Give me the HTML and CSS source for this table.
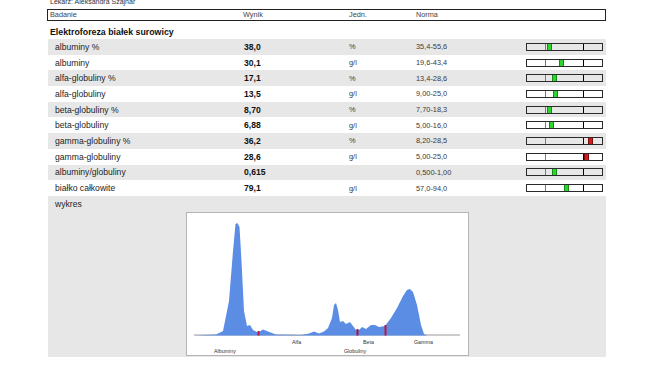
FILE: index.html
```html
<!DOCTYPE html>
<html lang="pl">
<head>
<meta charset="utf-8">
<title>Elektroforeza białek surowicy</title>
<link rel="stylesheet" href="styles.css">
</head>
<body>
<div class="page">
  <div class="doctor">Lekarz: Aleksandra Szajnar</div>
  <div class="head">
    <span>Badanie</span><span>Wynik</span><span>Jedn.</span><span>Norma</span><span></span>
  </div>
  <div class="section">Elektroforeza białek surowicy</div>
  <div class="rows">
    <div class="row alt"><span class="lbl">albuminy %</span><span class="val">38,0</span><span class="unit">%</span><span class="norm">35,4-55,6</span><div class="bar"><i class="lo"></i><i class="hi"></i><b class="mk ok" style="left:20px"></b></div></div>
    <div class="row"><span class="lbl">albuminy</span><span class="val">30,1</span><span class="unit">g/l</span><span class="norm">19,6-43,4</span><div class="bar"><i class="lo"></i><i class="hi"></i><b class="mk ok" style="left:32px"></b></div></div>
    <div class="row alt"><span class="lbl">alfa-globuliny %</span><span class="val">17,1</span><span class="unit">%</span><span class="norm">13,4-28,6</span><div class="bar"><i class="lo"></i><i class="hi"></i><b class="mk ok" style="left:25px"></b></div></div>
    <div class="row"><span class="lbl">alfa-globuliny</span><span class="val">13,5</span><span class="unit">g/l</span><span class="norm">9,00-25,0</span><div class="bar"><i class="lo"></i><i class="hi"></i><b class="mk ok" style="left:26px"></b></div></div>
    <div class="row alt"><span class="lbl">beta-globuliny %</span><span class="val">8,70</span><span class="unit">%</span><span class="norm">7,70-18,3</span><div class="bar"><i class="lo"></i><i class="hi"></i><b class="mk ok" style="left:20px"></b></div></div>
    <div class="row"><span class="lbl">beta-globuliny</span><span class="val">6,88</span><span class="unit">g/l</span><span class="norm">5,00-16,0</span><div class="bar"><i class="lo"></i><i class="hi"></i><b class="mk ok" style="left:22px"></b></div></div>
    <div class="row alt"><span class="lbl">gamma-globuliny %</span><span class="val">36,2</span><span class="unit">%</span><span class="norm">8,20-28,5</span><div class="bar"><i class="lo"></i><i class="hi"></i><b class="mk bad" style="left:61px"></b></div></div>
    <div class="row"><span class="lbl">gamma-globuliny</span><span class="val">28,6</span><span class="unit">g/l</span><span class="norm">5,00-25,0</span><div class="bar"><i class="lo"></i><i class="hi"></i><b class="mk bad" style="left:57px"></b></div></div>
    <div class="row alt"><span class="lbl">albuminy/globuliny</span><span class="val">0,615</span><span class="unit"></span><span class="norm">0,500-1,00</span><div class="bar"><i class="lo"></i><i class="hi"></i><b class="mk ok" style="left:25px"></b></div></div>
    <div class="row"><span class="lbl">białko całkowite</span><span class="val">79,1</span><span class="unit">g/l</span><span class="norm">57,0-94,0</span><div class="bar"><i class="lo"></i><i class="hi"></i><b class="mk ok" style="left:37px"></b></div></div>
    <div class="chart-row">
      <div class="lbl chart-title">wykres</div>
      <div class="chart">
        <svg width="281" height="142" viewBox="0 0 281 142">
          <line x1="7" y1="122" x2="273" y2="122" stroke="#9a9a9a" stroke-width="1"/>
          <path fill="#5b8de4" d="M7 122.5 L29 121.5 L36 118 L42 88 L46 38 L48.5 11 L50.5 10 L52.5 14 L54.5 48 L57 98 L60 113 L63 112 L66 117 L71 119.5 L76 116.5 L81 118.5 L89 121.5 L114 122 L122 120.5 L127 118.5 L132 120.5 L137 118.5 L141 115 L145 105 L147 92 L149 90 L151 97 L153 109 L156 108 L159 111 L163 109 L166 113 L169 117 L172 117 L175 114 L179 116 L184 112 L188 112 L192 114 L198 113 L204 105 L210 95 L216 83 L220 77 L223 76 L226 79 L230 92 L234 112 L237 121 L240 122.5 Z"/>
          <rect x="70.5" y="118" width="2" height="4.5" fill="#c0143c"/>
          <rect x="169.5" y="116" width="2" height="6.5" fill="#b0104a"/>
          <rect x="197.5" y="112" width="2" height="10.5" fill="#c0143c"/>
          <text x="27" y="140" class="ax">Albuminy</text>
          <text x="105" y="131" class="ax">Alfa</text>
          <text x="176" y="131" class="ax">Beta</text>
          <text x="227" y="131" class="ax">Gamma</text>
          <text x="157" y="140" class="ax">Globuliny</text>
        </svg>
      </div>
    </div>
  </div>
</div>
</body>
</html>
```

FILE: styles.css
```css
html, body {
  margin: 0;
  padding: 0;
  background: #ffffff;
}

body {
  font-family: "Liberation Sans", Arial, sans-serif;
  color: #1e1e1e;
  overflow: hidden;
}

.page {
  width: 559px;
  padding-left: 47px;
}

.doctor {
  margin-top: -2px;
  padding-left: 3px;
  font-size: 7px;
  line-height: 7px;
  height: 7px;
  color: #333;
}

.head {
  margin-top: 4px;
  box-sizing: border-box;
  height: 12px;
  border: 1px solid #222;
  padding-left: 2px;
  display: grid;
  grid-template-columns: 193px 106px 67px 110px 1fr;
  font-size: 7.3px;
  line-height: 10px;
  color: #444;
}

.section {
  padding: 4px 0 0 3px;
  height: 14px;
  line-height: 14px;
  font-size: 8.8px;
  font-weight: bold;
  color: #111;
}

.rows {
  margin-left: 1px;
  width: 558px;
}

.row {
  height: 15.7px;
  display: grid;
  grid-template-columns: 196px 105px 67px 110px 77px 3px;
  align-items: center;
}

.row.alt {
  background: #e7e7e7;
}

.lbl {
  padding-left: 7px;
  font-size: 8.6px;
  color: #1e1e1e;
}

.val {
  font-size: 8.6px;
  font-weight: bold;
  color: #111;
}

.unit,
.norm {
  font-size: 7.4px;
  color: #3a3a3a;
}

.bar {
  position: relative;
  box-sizing: border-box;
  height: 8px;
  border: 1px solid #2a2a2a;
}

.bar .lo {
  position: absolute;
  top: 0;
  bottom: 0;
  left: 18px;
  width: 1px;
  background: #7a7a7a;
}

.bar .hi {
  position: absolute;
  top: 0;
  bottom: 0;
  left: 56px;
  width: 1px;
  background: #000;
}

.bar .mk {
  position: absolute;
  top: 0;
  bottom: 0;
  width: 5px;
  box-sizing: border-box;
}

.mk.ok {
  background: #2fd52f;
  border-left: 1px solid #178a17;
  border-right: 1px solid #178a17;
}

.mk.bad {
  background: #d21c1c;
  border-left: 1px solid #7a0c0c;
  border-right: 1px solid #7a0c0c;
}

.chart-row {
  background: #e7e7e7;
  height: 161px;
  padding-top: 1px;
  box-sizing: border-box;
}

.chart-title {
  line-height: 14px;
  height: 14px;
}

.chart {
  margin: 1px auto 0;
  width: 283px;
  height: 144px;
  box-sizing: border-box;
  border: 1px solid #b4b4b4;
  background: #fff;
}

.chart svg {
  display: block;
}

.ax {
  font-family: "Liberation Sans", Arial, sans-serif;
  font-size: 5.3px;
  fill: #333;
}
```
